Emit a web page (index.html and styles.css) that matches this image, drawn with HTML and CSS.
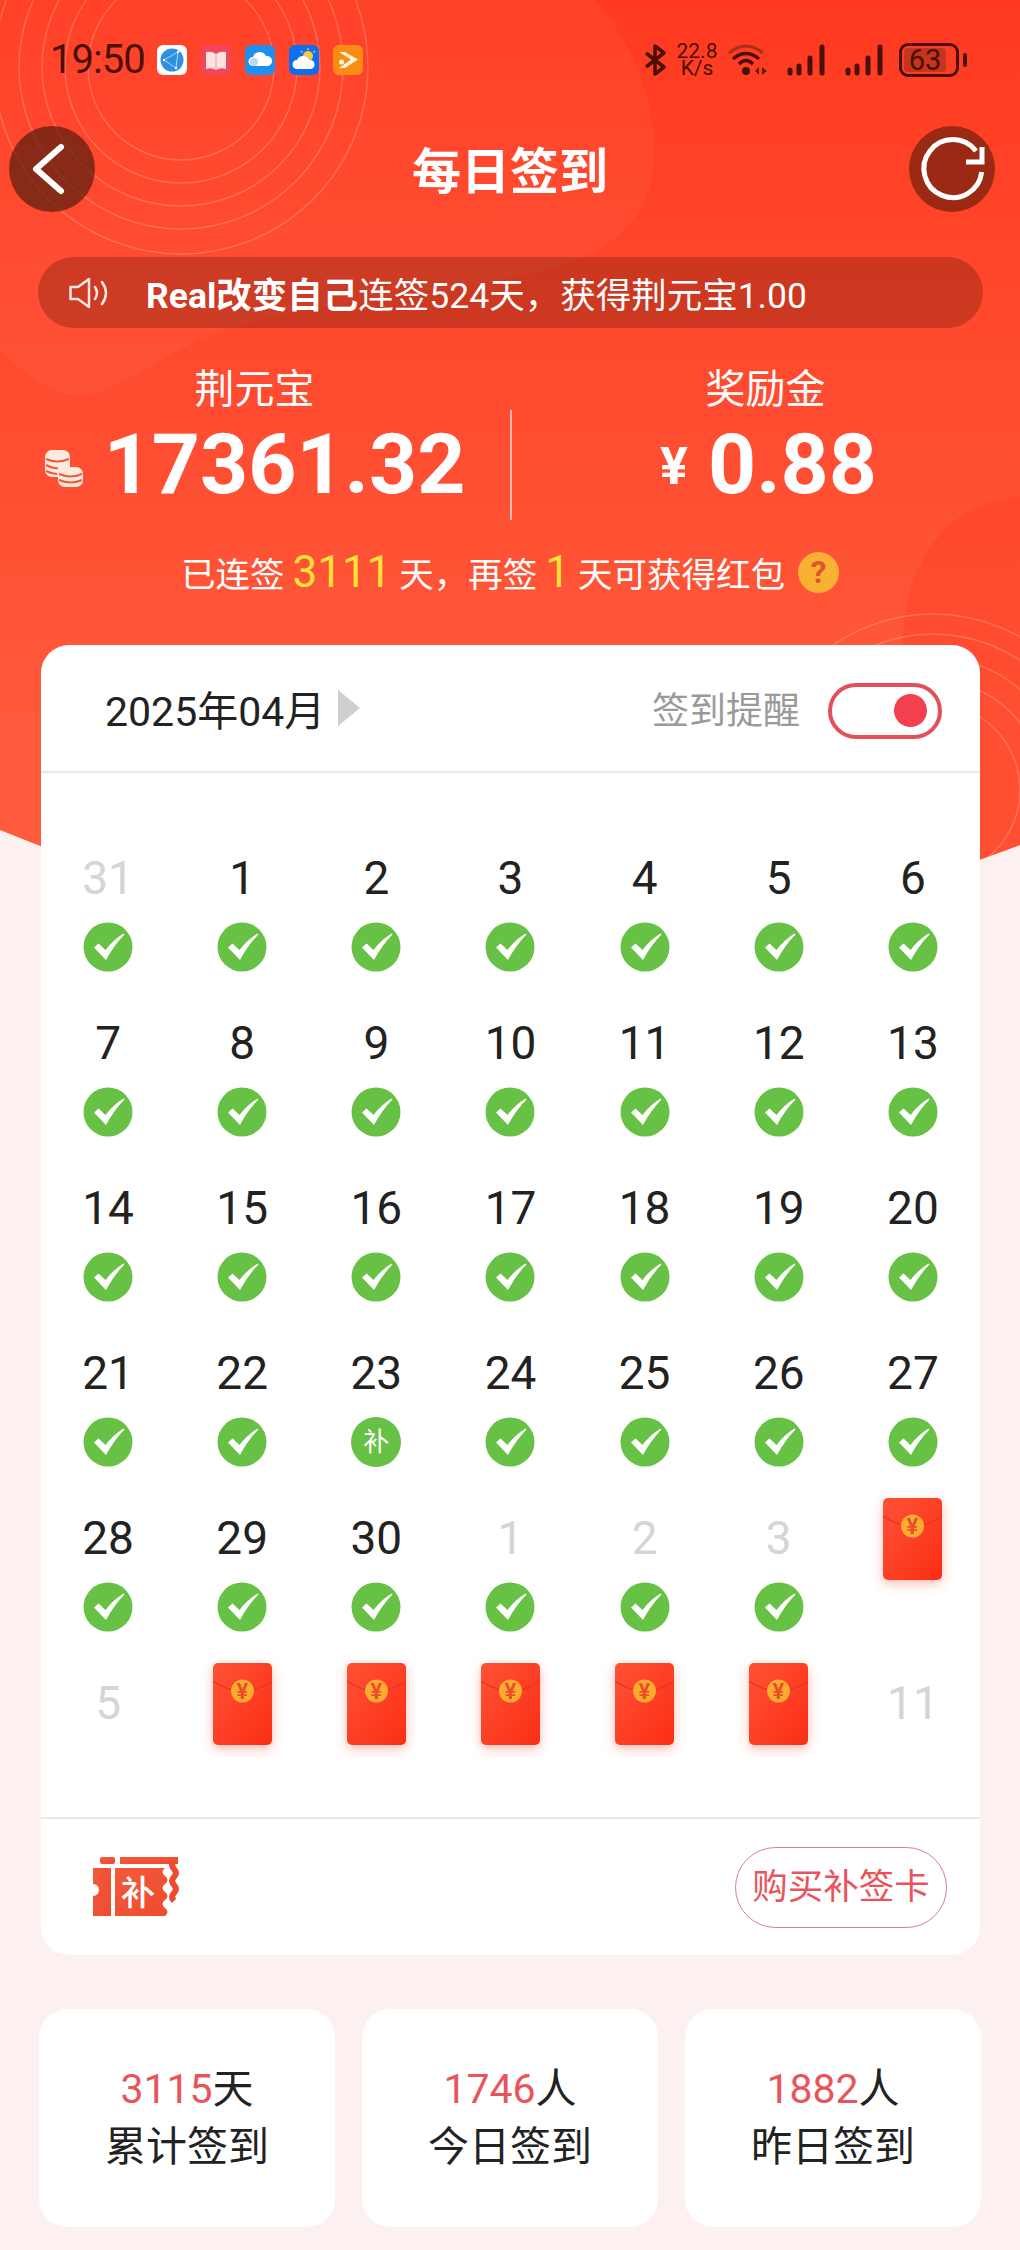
FILE: index.html
```html
<!DOCTYPE html>
<html>
	<head>
		<meta charset="utf-8" />
		<title>每日签到</title>
		<link rel="stylesheet" href="styles.css">
	</head>
	<body>
		<svg width="0" height="0" class="defs">
			<defs>
				<linearGradient id="heroFill" x1="0" y1="0" x2="0" y2="1">
					<stop offset="0" stop-color="#ff3a20" />
					<stop offset="0.7" stop-color="#ff5a3c" />
					<stop offset="1" stop-color="#ff5c3e" />
				</linearGradient>
				<linearGradient id="packetFill" x1="0" y1="0" x2="1" y2="1">
					<stop offset="0" stop-color="#ff5236" />
					<stop offset="1" stop-color="#fb2e14" />
				</linearGradient>
				<linearGradient id="ticketFill" x1="0" y1="0" x2="1" y2="1">
					<stop offset="0" stop-color="#f4593c" />
					<stop offset="1" stop-color="#ee4b2e" />
				</linearGradient>
				<symbol id="check" viewBox="0 0 50 50">
					<circle cx="25" cy="25" r="24.5" fill="#66c144" />
					<path d="M11 25.5 L15.5 21.5 L22.5 28 Q30 18 40.5 11.5 L41.5 12.5 Q31 23 23 38 Z" fill="#fff" />
				</symbol>
				<symbol id="packet" viewBox="0 0 59 82">
					<rect width="59" height="82" rx="5" fill="url(#packetFill)" />
					<path d="M0 18 Q30 38 59 18" fill="none" stroke="#e23a20" stroke-width="1.5" />
					<circle cx="29.5" cy="28" r="11.5" fill="#fbab2f" />
					<text x="29.5" y="36" class="packet-yen">¥</text>
				</symbol>
			</defs>
		</svg>

		<div class="page">
			<svg class="hero-bg" width="1020" height="1040" viewBox="0 0 1020 1040">
				<clipPath id="heroClip"><path d="M0 0H1020V845Q510 1040 0 830Z" /></clipPath>
				<g clip-path="url(#heroClip)">
					<rect width="1020" height="1040" fill="url(#heroFill)" />
					<path d="M0 0H595C640 50 665 130 650 185C630 255 560 270 470 285C370 300 270 310 197 340C150 365 110 395 80 395C50 395 20 370 0 350Z" fill="#fff" fill-opacity="0.04" />
					<path d="M1020 497C950 500 905 560 903 640V900H1020Z" fill="#ff3a20" fill-opacity="0.35" />
					<g fill="none" stroke="#fff" stroke-opacity="0.2" stroke-width="1.5">
						<circle cx="181" cy="67" r="93" />
						<circle cx="181" cy="67" r="116" />
						<circle cx="181" cy="67" r="139" />
						<circle cx="181" cy="67" r="162" />
						<circle cx="181" cy="67" r="187" />
						<circle cx="933" cy="790" r="87" />
						<circle cx="933" cy="790" r="110" />
						<circle cx="933" cy="790" r="133" />
						<circle cx="933" cy="790" r="156" />
						<circle cx="933" cy="790" r="176" />
					</g>
				</g>
			</svg>

			<div class="content">
				<div class="status">
					<div class="status-left">
						<span class="clock">19:50</span>
						<svg class="app" viewBox="0 0 30 30"><rect width="30" height="30" rx="6" fill="#fff" /><circle cx="15" cy="15" r="11.5" fill="#2f8fe0" /><path d="M21 7 L7 15 L19 23 Z" fill="none" stroke="#cfe8fb" stroke-width="0.8" /><circle cx="21" cy="7" r="1.2" fill="#fff" /><circle cx="7" cy="15" r="1.2" fill="#fff" /><circle cx="19" cy="23" r="1.2" fill="#fff" /></svg>
						<svg class="app" viewBox="0 0 30 30"><rect width="30" height="30" rx="6" fill="#f0485a" /><path d="M5 7 Q11 6 15 9 Q19 6 25 7 V24 Q19 22 15 25 Q11 22 5 24 Z" fill="#fde3e0" /><path d="M15 9V25" stroke="#f2a0a0" stroke-width="1" /></svg>
						<svg class="app" viewBox="0 0 30 30"><rect width="30" height="30" rx="6" fill="#1d8ff0" /><path d="M8 21 A4.5 4.5 0 0 1 8 12 A7 7 0 0 1 21 11 A5 5 0 0 1 23 21 Z" fill="#fff" /><circle cx="9" cy="17" r="4" fill="#b9d9f7" /></svg>
						<svg class="app" viewBox="0 0 30 30"><rect width="30" height="30" rx="6" fill="#0d6ff0" /><circle cx="19" cy="11" r="5" fill="#f7c948" /><path d="M19 3V5M26 6L24.500 7.500M12 6L13.500 7.500" stroke="#f7c948" stroke-width="1.3" /><path d="M8 24 A4.500 4.500 0 0 1 8 15 A6.500 6.500 0 0 1 20 15 A4.500 4.500 0 0 1 22 24 Z" fill="#fff" /></svg>
						<svg class="app" viewBox="0 0 30 30"><rect width="30" height="30" rx="6" fill="#fb8c12" /><path d="M6 7H12L25 14.500L12 23H6L18 14.500Z" fill="#fff3dc" /><circle cx="8.500" cy="17" r="2.500" fill="#fff3dc" /></svg>
					</div>
					<div class="status-right">
						<svg class="bt" width="22" height="32" viewBox="0 0 22 32"><path d="M2 9 L20 23 L11 30 V2 L20 9 L2 23" fill="none" stroke="#4a0f05" stroke-width="3.500" stroke-linejoin="round" /></svg>
						<span class="speed"><b>22.8</b><b>K/s</b></span>
						<svg class="wifi" width="40" height="32" viewBox="0 0 40 32"><path d="M1 9 Q18 -5 35 9" fill="none" stroke="#a8301c" stroke-width="3" /><path d="M5 15 Q18 4 31 15" fill="none" stroke="#4a0f05" stroke-width="3.500" /><path d="M11 20 Q18 13 25 20" fill="none" stroke="#4a0f05" stroke-width="3.500" /><circle cx="18" cy="27" r="4" fill="#4a0f05" /><path d="M27 27L31 23V31ZM39 27L34 23V31Z" fill="#6a1a0c" /></svg>
						<svg class="bars" width="40" height="32" viewBox="0 0 40 32"><g stroke="#4a0f05" stroke-width="5" stroke-linecap="round"><path d="M4 26V29" /><path d="M13 22V29" /><path d="M24 14V29" /><path d="M36 3V29" /></g></svg>
						<svg class="bars" width="40" height="32" viewBox="0 0 40 32"><g stroke="#4a0f05" stroke-width="5" stroke-linecap="round"><path d="M4 26V29" /><path d="M13 22V29" /><path d="M24 14V29" /><path d="M36 3V29" /></g></svg>
						<span class="battery"><span class="battery-level">63</span></span>
						<span class="battery-tip"></span>
					</div>
				</div>

				<div class="nav">
					<a class="round-btn round-back">
						<svg width="86" height="86" viewBox="0 0 86 86"><path d="M52 21 L27 43 L52 65" fill="none" stroke="#fff" stroke-width="6" stroke-linecap="round" stroke-linejoin="round" /></svg>
					</a>
					<h1 class="title">每日签到</h1>
					<a class="round-btn round-refresh">
						<svg width="86" height="86" viewBox="0 0 86 86"><path d="M72.700 46 A29 29 0 1 1 67 25" fill="none" stroke="#fff" stroke-width="5" /><path d="M57 36 H73 V21" fill="none" stroke="#fff" stroke-width="5" /></svg>
					</a>
				</div>

				<div class="notice">
					<svg width="42" height="32" viewBox="0 0 42 32"><path d="M1.500 10 H9 L20 2 V30 L9 22 H1.500 Z" fill="none" stroke="#ffe8e0" stroke-width="2.500" stroke-linejoin="round" /><path d="M26 10 Q30 16 26 22 M33 5 Q41 16 33 27" fill="none" stroke="#ffe8e0" stroke-width="2.500" stroke-linecap="round" /></svg>
					<p class="notice-text"><b>Real改变自己</b>连签524天，获得荆元宝1.00</p>
				</div>

				<div class="stats">
					<div class="stat">
						<div class="stat-label">荆元宝</div>
						<div class="stat-value">
							<svg width="40" height="40" viewBox="0 0 40 40">
								<g fill="#ffeae2">
									<rect x="1" y="3" width="25" height="27" rx="7" />
									<rect x="14" y="20" width="25" height="20" rx="7" />
								</g>
								<g fill="none" stroke="#ef5a3c" stroke-width="2">
									<path d="M2 12 Q13 17 25 12 M2 18 Q10 22 14 21 M2 24 Q8 27 13 27" />
									<path d="M15 27 Q27 32 38 27 M15 33 Q27 38 38 33" />
								</g>
							</svg>
							<span class="amount">17361.32</span>
						</div>
					</div>
					<div class="stats-rule"></div>
					<div class="stat">
						<div class="stat-label">奖励金</div>
						<div class="stat-value stat-value-cash">
							<span class="yen">¥</span>
							<span class="amount">0.88</span>
						</div>
					</div>
				</div>

				<div class="streak">
					已连签<span class="streak-num">3111</span>天，再签<span class="streak-num">1</span>天可获得红包<span class="help">?</span>
				</div>

				<div class="card">
					<div class="card-head">
						<div class="month">2025年04月<span class="month-arrow"></span></div>
						<div class="remind">
							<span class="remind-label">签到提醒</span>
							<span class="toggle"><span class="toggle-dot"></span></span>
						</div>
					</div>

					<div class="days">
						<div class="day"><span class="num off">31</span><svg class="mark"><use href="#check" /></svg></div>
						<div class="day"><span class="num">1</span><svg class="mark"><use href="#check" /></svg></div>
						<div class="day"><span class="num">2</span><svg class="mark"><use href="#check" /></svg></div>
						<div class="day"><span class="num">3</span><svg class="mark"><use href="#check" /></svg></div>
						<div class="day"><span class="num">4</span><svg class="mark"><use href="#check" /></svg></div>
						<div class="day"><span class="num">5</span><svg class="mark"><use href="#check" /></svg></div>
						<div class="day"><span class="num">6</span><svg class="mark"><use href="#check" /></svg></div>

						<div class="day"><span class="num">7</span><svg class="mark"><use href="#check" /></svg></div>
						<div class="day"><span class="num">8</span><svg class="mark"><use href="#check" /></svg></div>
						<div class="day"><span class="num">9</span><svg class="mark"><use href="#check" /></svg></div>
						<div class="day"><span class="num">10</span><svg class="mark"><use href="#check" /></svg></div>
						<div class="day"><span class="num">11</span><svg class="mark"><use href="#check" /></svg></div>
						<div class="day"><span class="num">12</span><svg class="mark"><use href="#check" /></svg></div>
						<div class="day"><span class="num">13</span><svg class="mark"><use href="#check" /></svg></div>

						<div class="day"><span class="num">14</span><svg class="mark"><use href="#check" /></svg></div>
						<div class="day"><span class="num">15</span><svg class="mark"><use href="#check" /></svg></div>
						<div class="day"><span class="num">16</span><svg class="mark"><use href="#check" /></svg></div>
						<div class="day"><span class="num">17</span><svg class="mark"><use href="#check" /></svg></div>
						<div class="day"><span class="num">18</span><svg class="mark"><use href="#check" /></svg></div>
						<div class="day"><span class="num">19</span><svg class="mark"><use href="#check" /></svg></div>
						<div class="day"><span class="num">20</span><svg class="mark"><use href="#check" /></svg></div>

						<div class="day"><span class="num">21</span><svg class="mark"><use href="#check" /></svg></div>
						<div class="day"><span class="num">22</span><svg class="mark"><use href="#check" /></svg></div>
						<div class="day"><span class="num">23</span><span class="mark-fix">补</span></div>
						<div class="day"><span class="num">24</span><svg class="mark"><use href="#check" /></svg></div>
						<div class="day"><span class="num">25</span><svg class="mark"><use href="#check" /></svg></div>
						<div class="day"><span class="num">26</span><svg class="mark"><use href="#check" /></svg></div>
						<div class="day"><span class="num">27</span><svg class="mark"><use href="#check" /></svg></div>

						<div class="day"><span class="num">28</span><svg class="mark"><use href="#check" /></svg></div>
						<div class="day"><span class="num">29</span><svg class="mark"><use href="#check" /></svg></div>
						<div class="day"><span class="num">30</span><svg class="mark"><use href="#check" /></svg></div>
						<div class="day"><span class="num off">1</span><svg class="mark"><use href="#check" /></svg></div>
						<div class="day"><span class="num off">2</span><svg class="mark"><use href="#check" /></svg></div>
						<div class="day"><span class="num off">3</span><svg class="mark"><use href="#check" /></svg></div>
						<div class="day"><svg class="packet"><use href="#packet" /></svg></div>

						<div class="day"><span class="num off">5</span></div>
						<div class="day"><svg class="packet"><use href="#packet" /></svg></div>
						<div class="day"><svg class="packet"><use href="#packet" /></svg></div>
						<div class="day"><svg class="packet"><use href="#packet" /></svg></div>
						<div class="day"><svg class="packet"><use href="#packet" /></svg></div>
						<div class="day"><svg class="packet"><use href="#packet" /></svg></div>
						<div class="day"><span class="num off">11</span></div>
					</div>

					<div class="card-foot">
						<svg width="87" height="60" viewBox="0 0 87 60">
							<path d="M0 11H18V59H0V39a6 6 0 0 0 0-12Z" fill="url(#ticketFill)" />
							<path d="M22 11H72q-5 4 0 8t0 8 0 8 0 8 0 8 0 8H22Z" fill="url(#ticketFill)" />
							<rect x="7" y="0" width="15" height="7" rx="2" fill="url(#ticketFill)" />
							<rect x="27" y="0" width="58" height="7" fill="url(#ticketFill)" />
							<path d="M81 4q-4 4 0 8t0 8 0 8 0 8 0 8" fill="none" stroke="#ee4b2e" stroke-width="6" />
							<text x="45" y="48" class="ticket-text">补</text>
						</svg>
						<a class="buy">购买补签卡</a>
					</div>
				</div>

				<div class="totals">
					<div class="total">
						<div><span class="total-num">3115</span>天</div>
						<div>累计签到</div>
					</div>
					<div class="total">
						<div><span class="total-num">1746</span>人</div>
						<div>今日签到</div>
					</div>
					<div class="total">
						<div><span class="total-num">1882</span>人</div>
						<div>昨日签到</div>
					</div>
				</div>
			</div>
		</div>
	</body>
</html>
```

FILE: styles.css
```css
html, body { margin: 0; padding: 0; }
body {
	background: #fdf0f0;
	font-family: Roboto, "Noto Sans CJK SC", sans-serif;
	color: #222;
}
.defs { position: absolute; }
.page {
	position: relative;
	width: 1020px;
	height: 2250px;
	overflow: hidden;
}
.hero-bg { position: absolute; top: 0; left: 0; }
.content { position: relative; }

/* status bar */
.status {
	display: flex;
	justify-content: space-between;
	align-items: center;
	height: 30px;
	padding: 45px 53px 51px 50px;
	color: #4a0f05;
}
.status-left, .status-right { display: flex; align-items: center; }
.clock {
	width: 107px;
	font-size: 40px;
	line-height: 32px;
	letter-spacing: -1px;
}
.app { width: 30px; height: 30px; margin-right: 14px; }
.status-right svg { display: block; }
.bt { margin-right: 9px; }
.speed {
	display: flex;
	flex-direction: column;
	align-items: center;
	width: 44px;
	margin-right: 9px;
}
.speed b {
	font-weight: 400;
	font-size: 21px;
	line-height: 17px;
}
.wifi { margin-right: 18px; }
.bars { margin-right: 18px; }
.battery {
	display: block;
	box-sizing: border-box;
	width: 60px;
	height: 34px;
	margin-left: -3px;
	border: 3px solid #4a0f05;
	border-radius: 9px;
	padding: 2px;
}
.battery-level {
	display: block;
	width: 42px;
	height: 24px;
	border-radius: 4px;
	background: #c5341c;
	font-size: 29px;
	line-height: 24px;
	text-align: center;
}
.battery-tip {
	display: block;
	width: 4px;
	height: 14px;
	margin-left: 4px;
	border-radius: 2px;
	background: #4a0f05;
}

/* nav */
.nav {
	display: grid;
	grid-template-columns: 1fr auto 1fr;
	align-items: center;
	height: 86px;
	padding: 0 25px 0 9px;
}
.round-btn {
	display: block;
	width: 86px;
	height: 86px;
	border-radius: 50%;
}
.round-btn svg { display: block; }
.round-back { background: rgba(90, 30, 15, 0.72); }
.round-refresh { background: #9b2914; justify-self: end; }
.title {
	margin: 7px 0 0 16px;
	font-size: 49px;
	line-height: 60px;
	font-weight: 700;
	color: #fff;
}

/* notice */
.notice {
	display: flex;
	align-items: center;
	height: 71px;
	margin: 45px 37px 0 38px;
	padding-left: 31px;
	border-radius: 36px;
	background: rgba(150, 40, 20, 0.48);
}
.notice-text {
	margin: 0 0 0 35px;
	font-size: 35.5px;
	color: #fff;
}
.notice-text b { font-weight: 700; }

/* balance */
.stats {
	display: grid;
	grid-template-columns: 1fr 2px 1fr;
	margin-top: 35px;
	color: #fff;
}
.stat { text-align: center; }
.stat-label {
	font-size: 40px;
	line-height: 54px;
}
.stat-value {
	display: flex;
	justify-content: center;
	align-items: center;
	gap: 20px;
	height: 80px;
	margin-top: 8px;
}
.stat-value svg { display: block; margin-top: 4px; }
.stat-value-cash { padding-left: 6px; }
.amount {
	font-size: 84px;
	line-height: 80px;
	font-weight: 700;
}
.yen {
	font-size: 52px;
	font-weight: 700;
	line-height: 46px;
	margin-top: 4px;
}
.stats-rule {
	height: 110px;
	margin: 47px -1px 0 1px;
	background: rgba(255, 255, 255, 0.6);
}
.streak {
	display: flex;
	justify-content: center;
	align-items: center;
	height: 50px;
	margin-top: 27px;
	font-size: 34.5px;
	color: #fff;
}
.streak-num {
	margin: 0 8px;
	font-size: 44px;
	color: #ffe13a;
}
.help {
	width: 41px;
	height: 41px;
	margin-left: 13px;
	border-radius: 50%;
	background: #f8b133;
	color: #e0552a;
	font-size: 32px;
	font-weight: 700;
	line-height: 41px;
	text-align: center;
}

/* calendar card */
.card {
	margin: 48px 40px 0 41px;
	border-radius: 28px;
	background: #fff;
}
.card-head {
	display: flex;
	justify-content: space-between;
	align-items: center;
	height: 126px;
	padding: 0 38px 0 64px;
	border-bottom: 2px solid #e8e8e8;
}
.month {
	display: flex;
	align-items: center;
	font-size: 41px;
	color: #222;
}
.month-arrow {
	width: 0;
	height: 0;
	margin-left: 13px;
	border-left: 22px solid #cfcfcf;
	border-top: 18px solid transparent;
	border-bottom: 18px solid transparent;
}
.remind { display: flex; align-items: center; }
.remind-label {
	margin-right: 28px;
	font-size: 37px;
	color: #9a9a9a;
}
.toggle {
	display: flex;
	justify-content: flex-end;
	align-items: center;
	box-sizing: border-box;
	width: 114px;
	height: 56px;
	margin-top: 5px;
	padding-right: 11px;
	border: 4px solid #e4505a;
	border-radius: 28px;
}
.toggle-dot {
	width: 33px;
	height: 33px;
	border-radius: 50%;
	background: #f43f4f;
}
.days {
	display: grid;
	grid-template-columns: repeat(7, 1fr);
	grid-auto-rows: 124px;
	row-gap: 41px;
	padding: 75px 0 20px;
}
.day {
	display: flex;
	flex-direction: column;
	align-items: center;
}
.num {
	font-size: 46px;
	line-height: 60px;
	color: #222;
}
.num.off { color: #d5d5d5; }
.mark {
	width: 50px;
	height: 50px;
	margin-top: 14px;
}
.mark-fix {
	width: 50px;
	height: 50px;
	margin-top: 14px;
	border-radius: 50%;
	background: #66c144;
	color: #fff;
	font-size: 26px;
	line-height: 50px;
	text-align: center;
}
.packet {
	width: 59px;
	height: 82px;
	margin-top: -10px;
	filter: drop-shadow(0 4px 6px rgba(255, 70, 40, 0.35));
	overflow: visible;
}
.packet-yen {
	font-family: Roboto, sans-serif;
	font-size: 22px;
	font-weight: 700;
	fill: #e8502a;
	text-anchor: middle;
}
.card-foot {
	display: flex;
	justify-content: space-between;
	align-items: center;
	height: 136px;
	padding: 0 33px 0 52px;
	border-top: 2px solid #e8e8e8;
}
.ticket-text {
	font-family: "Noto Sans CJK SC", sans-serif;
	font-size: 34px;
	font-weight: 500;
	fill: #fff;
	text-anchor: middle;
}
.buy {
	box-sizing: border-box;
	width: 212px;
	height: 81px;
	border: 1px solid #d98080;
	border-radius: 41px;
	color: #e8545a;
	font-size: 35.5px;
	line-height: 78px;
	text-align: center;
}

/* totals */
.totals {
	display: grid;
	grid-template-columns: repeat(3, 296px);
	column-gap: 27px;
	margin: 54px 0 0 39px;
}
.total {
	box-sizing: border-box;
	height: 218px;
	padding: 51px 0 0;
	border-radius: 28px;
	background: #fff;
	font-size: 41px;
	line-height: 58px;
	text-align: center;
}
.total-num { color: #e8545a; }
```
